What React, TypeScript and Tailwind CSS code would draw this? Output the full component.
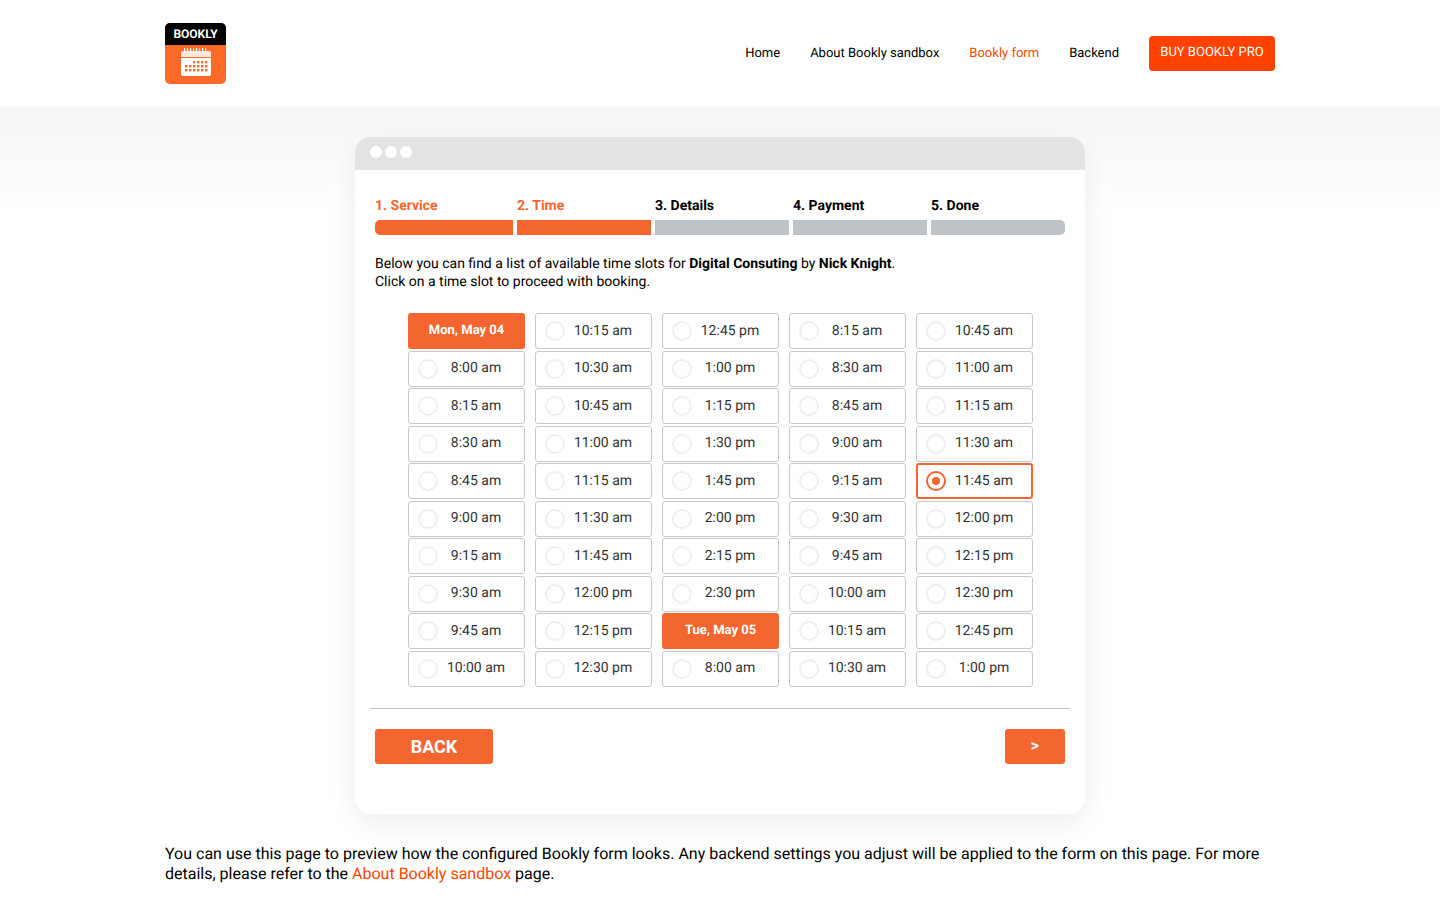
import React from "react"

const columns: { date?: string; at: number; slots: string[] }[] = [
  { date: "Mon, May 04", at: 0, slots: ["8:00 am", "8:15 am", "8:30 am", "8:45 am", "9:00 am", "9:15 am", "9:30 am", "9:45 am", "10:00 am"] },
  { at: -1, slots: ["10:15 am", "10:30 am", "10:45 am", "11:00 am", "11:15 am", "11:30 am", "11:45 am", "12:00 pm", "12:15 pm", "12:30 pm"] },
  { date: "Tue, May 05", at: 8, slots: ["12:45 pm", "1:00 pm", "1:15 pm", "1:30 pm", "1:45 pm", "2:00 pm", "2:15 pm", "2:30 pm", "8:00 am"] },
  { at: -1, slots: ["8:15 am", "8:30 am", "8:45 am", "9:00 am", "9:15 am", "9:30 am", "9:45 am", "10:00 am", "10:15 am", "10:30 am"] },
  { at: -1, slots: ["10:45 am", "11:00 am", "11:15 am", "11:30 am", "11:45 am", "12:00 pm", "12:15 pm", "12:30 pm", "12:45 pm", "1:00 pm"] },
]

const steps = [
  { label: "1. Service", on: true, cls: "w-[138px] rounded-l-[5px]" },
  { label: "2. Time", on: true, cls: "w-[134px]" },
  { label: "3. Details", on: false, cls: "w-[134px]" },
  { label: "4. Payment", on: false, cls: "w-[134px]" },
  { label: "5. Done", on: false, cls: "w-[134px] rounded-r-[5px]" },
]

function Logo() {
  return (
    <div className="w-[61px] h-[61px] rounded-[5px] overflow-hidden bg-[#ff6b26] flex flex-col items-center">
      <div className="w-full h-[22px] bg-black text-white text-[12px] font-bold leading-[22px] text-center">BOOKLY</div>
      <svg width="30" height="29" viewBox="0 0 30 29" className="mt-[3px]">
        <g fill="#fff">
          {[3, 6, 9, 12, 15, 18, 21, 24].map((x) => (
            <rect key={x} x={x} y="0" width="1.2" height="5" />
          ))}
          <path d="M2 3h26a2 2 0 0 1 2 2v4H0V5a2 2 0 0 1 2-2z" opacity="0.85" />
          <path d="M0 10h30v16a2 2 0 0 1-2 2H2a2 2 0 0 1-2-2z" />
        </g>
        <g fill="#ff6b26">
          {[13, 17, 21].map((y) =>
            [4, 8, 12, 16, 20, 24].map((x) =>
              (y === 13 && x < 12) ? null : <rect key={`${x}-${y}`} x={x} y={y} width="2.4" height="2.4" />
            )
          )}
        </g>
      </svg>
    </div>
  )
}

function Slot({ time, picked }: { time: string; picked?: boolean }) {
  return (
    <div
      className={`h-9 w-[117px] rounded-[3px] bg-white flex items-center relative ${
        picked ? "border-2 border-[#f4662f]" : "border border-[#c9c9c9]"
      }`}
    >
      <span
        className={`absolute left-[9px] w-5 h-5 rounded-full flex items-center justify-center ${
          picked ? "border-2 border-[#f4662f] -ml-px" : "border-2 border-[#efefef]"
        }`}
      >
        {picked && <span className="w-2 h-2 rounded-full bg-[#f4662f]" />}
      </span>
      <span className="w-full pl-[19px] text-center text-[14px] text-[#333]">{time}</span>
    </div>
  )
}

export default function App() {
  return (
    <div className="min-h-screen bg-white text-black font-['Roboto',sans-serif] [text-rendering:geometricPrecision]">
      <header className="h-[107px] w-[1110px] mx-auto flex items-center justify-between">
        <Logo />
        <nav className="flex items-center gap-[30px] text-[13px]">
          <a>Home</a>
          <a>About Bookly sandbox</a>
          <a className="text-[#ff4500]">Bookly form</a>
          <a>Backend</a>
          <a className="h-[35px] w-[126px] -mt-[1px] rounded-[4px] bg-[#ff4200] text-white flex items-center justify-center">BUY BOOKLY PRO</a>
        </nav>
      </header>

      <main className="bg-gradient-to-b from-[#f6f6f6] to-white to-[110px] pt-[30px]">
        <div className="mx-auto w-[730px] h-[677px] rounded-[16px] bg-white shadow-[0_10px_30px_rgba(0,0,0,0.07)] overflow-hidden">
          <div className="h-[33px] bg-[#e3e3e3] flex items-start gap-[3px] pl-[15px] pt-[9px]">
            <span className="w-3 h-3 rounded-full bg-white" />
            <span className="w-3 h-3 rounded-full bg-white" />
            <span className="w-3 h-3 rounded-full bg-white" />
          </div>

          <div className="px-5 pt-[28px]">
            <div className="flex gap-1">
              {steps.map((s) => (
                <div key={s.label} className={s.cls.split(" ")[0]}>
                  <div className={`h-[16px] leading-[16px] text-[14px] font-bold ${s.on ? "text-[#f4662f]" : "text-black"}`}>{s.label}</div>
                  <div className={`mt-[6px] h-[15px] ${s.cls} ${s.on ? "bg-[#f4662f]" : "bg-[#bec3c7]"}`} />
                </div>
              ))}
            </div>

            <p className="mt-[20px] text-[14px] leading-[18px]">
              Below you can find a list of available time slots for <b>Digital Consuting</b> by <b>Nick Knight</b>.
              <br />
              Click on a time slot to proceed with booking.
            </p>

            <div className="mt-[22px] ml-[33px] flex gap-[10px]">
              {columns.map((col, i) => (
                <div key={i} className="flex flex-col gap-[1.5px]">
                  {col.at === 0 && <DateCell label={col.date!} />}
                  {col.slots.map((t, j) => (
                    <React.Fragment key={j}>
                      {col.date && col.at > 0 && j === col.at && <DateCell label={col.date} />}
                      <Slot time={t} picked={i === 4 && j === 4} />
                    </React.Fragment>
                  ))}
                </div>
              ))}
            </div>
          </div>

          <div className="mx-[15px] mt-[21px] border-t border-[#c4c4c4]" />

          <div className="px-5 mt-[20px] flex justify-between">
            <button className="w-[118px] h-[35px] rounded-[3px] bg-[#f4662f] text-white text-[18px] font-bold">BACK</button>
            <button className="w-[60px] h-[35px] rounded-[3px] bg-[#f4662f] text-white text-[16px] font-bold">&gt;</button>
          </div>
        </div>

        <p className="mx-auto w-[1110px] mt-[30px] text-[16px] leading-[20px]">
          You can use this page to preview how the configured Bookly form looks. Any backend settings you adjust will be applied to the form on this page. For more details, please refer to the <a className="text-[#ff4500]">About Bookly sandbox</a> page.
        </p>
      </main>
    </div>
  )
}

function DateCell({ label }: { label: string }) {
  return (
    <div className="h-9 w-[117px] rounded-[3px] bg-[#f4662f] text-white text-[13px] font-bold flex items-center justify-center">
      {label}
    </div>
  )
}
